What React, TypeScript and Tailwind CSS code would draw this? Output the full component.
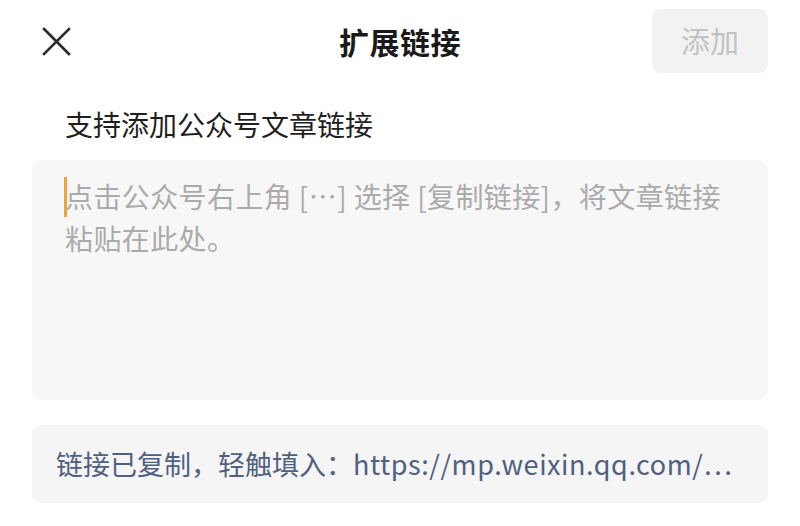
import { useState } from 'react';

const FONT = "font-['PingFang_SC','Noto_Sans_CJK_SC','Noto_Sans',sans-serif]";

export default function App() {
  const [text, setText] = useState('');

  return (
    <main className={`w-[800px] h-[526px] bg-white overflow-hidden ${FONT}`}>
      {/* Header */}
      <header className="grid grid-cols-[1fr_auto_1fr] items-center h-[84px] pl-[42px] pr-[32px] pb-[2px]">
        <button className="w-[29px] h-[29px] flex items-center justify-center text-[#2b2b2b]" aria-label="关闭">
          <svg viewBox="0 0 28 28" className="w-[29px] h-[29px]" fill="none" stroke="currentColor" strokeWidth="2.6" strokeLinecap="square">
            <path d="M2 2 L26 26 M26 2 L2 26" />
          </svg>
        </button>
        <h1 className="text-[30px] font-bold text-[#1a1a1a] tracking-[0.5px] ml-[-10px]">扩展链接</h1>
        <div className="flex justify-end">
          <button disabled className="w-[116px] h-[64px] rounded-[9px] bg-[#f2f2f2] text-[29px] text-[#c2c2c2]">
            添加
          </button>
        </div>
      </header>

      {/* Hint */}
      <p className="pl-[65px] pt-[20px] text-[28px] leading-[40px] text-[#1f1f1f]">支持添加公众号文章链接</p>

      {/* Textarea */}
      <div className="mx-[32px] mt-[16px] h-[240px] rounded-[10px] bg-[#f7f7f7] pl-[33px] pr-[34px] pt-[15px]">
        <div className="relative">
          <span className="absolute left-[-1px] top-[2px] w-[3px] h-[40px] bg-[#f0a33b]" />
          {text === '' ? (
            <p className="text-[28px] leading-[42px] text-[#ababab] tracking-[0.4px]">
              点击公众号右上角 [⋯] 选择 [复制链接]，将文章链接粘贴在此处。
            </p>
          ) : (
            <p className="text-[28px] leading-[42px] text-[#1f1f1f]">{text}</p>
          )}
        </div>
      </div>

      {/* Clipboard suggestion */}
      <button
        onClick={() => setText('https://mp.weixin.qq.com/')}
        className="mx-[32px] mt-[25px] w-[736px] h-[78px] rounded-[10px] bg-[#f5f5f5] text-left pl-[24px] text-[27px] text-[#50607f] whitespace-nowrap overflow-hidden"
      >
        链接已复制，轻触填入：<span className="tracking-[0.55px]">https://mp.weixin.qq.com/…</span>
      </button>
    </main>
  );
}
